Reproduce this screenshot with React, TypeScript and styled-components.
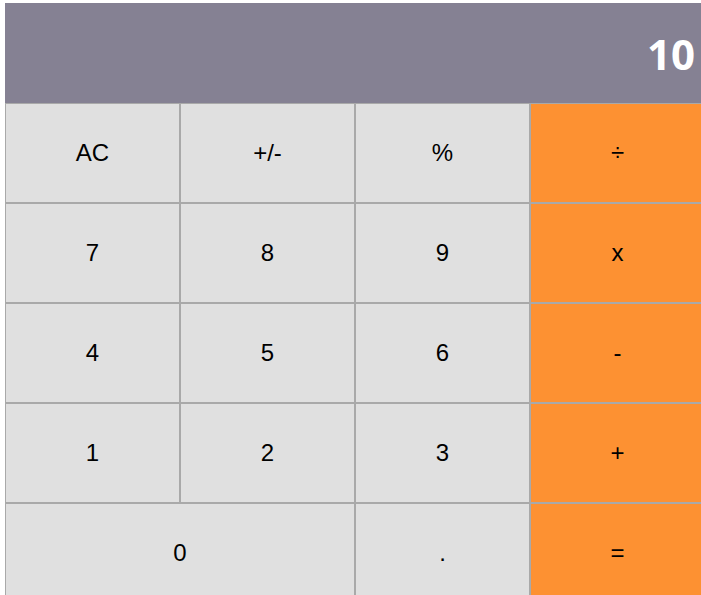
import React from "react";
import styled, { createGlobalStyle } from "styled-components";

const GlobalStyle = createGlobalStyle`
    body {
        margin: 0;
        padding: 3px 0 0 5px;
        background: #ffffff;
        overflow: hidden;
    }
`;

const Calculator = styled.div`
    width: 700px;
    display: flex;
    flex-direction: column;
`;

const Display = styled.div`
    height: 100px;
    background-color: #858193;
    color: #ffffff;
    display: flex;
    align-items: center;
    justify-content: flex-end;
    padding: 0 10px;
    box-sizing: border-box;
    font-family: "Open Sans", sans-serif;
    font-weight: 700;
    font-size: 42px;
`;

const Keypad = styled.div`
    display: grid;
    grid-template-columns: repeat(4, 175px);
    grid-auto-rows: 100px;
`;

const Key = styled.button<{ $operator?: boolean; $wide?: boolean }>`
    grid-column: span ${(p) => (p.$wide ? 2 : 1)};
    margin: 0;
    padding: 0;
    border: 1px solid #a9a9a9;
    background-color: ${(p) => (p.$operator ? "#fd9132" : "#e0e0e0")};
    color: #000000;
    font-family: "Liberation Sans", Arial, sans-serif;
    font-size: 24px;
    cursor: pointer;
    display: flex;
    align-items: center;
    justify-content: center;
`;

const keys: { label: string; operator?: boolean; wide?: boolean }[] = [
    { label: "AC" },
    { label: "+/-" },
    { label: "%" },
    { label: "÷", operator: true },
    { label: "7" },
    { label: "8" },
    { label: "9" },
    { label: "x", operator: true },
    { label: "4" },
    { label: "5" },
    { label: "6" },
    { label: "-", operator: true },
    { label: "1" },
    { label: "2" },
    { label: "3" },
    { label: "+", operator: true },
    { label: "0", wide: true },
    { label: "." },
    { label: "=", operator: true },
];

const App = () => {
    return (
        <>
            <GlobalStyle />
            <Calculator>
                <Display>10</Display>
                <Keypad>
                    {keys.map((k) => (
                        <Key key={k.label} $operator={k.operator} $wide={k.wide}>
                            {k.label}
                        </Key>
                    ))}
                </Keypad>
            </Calculator>
        </>
    );
};

export default App;
